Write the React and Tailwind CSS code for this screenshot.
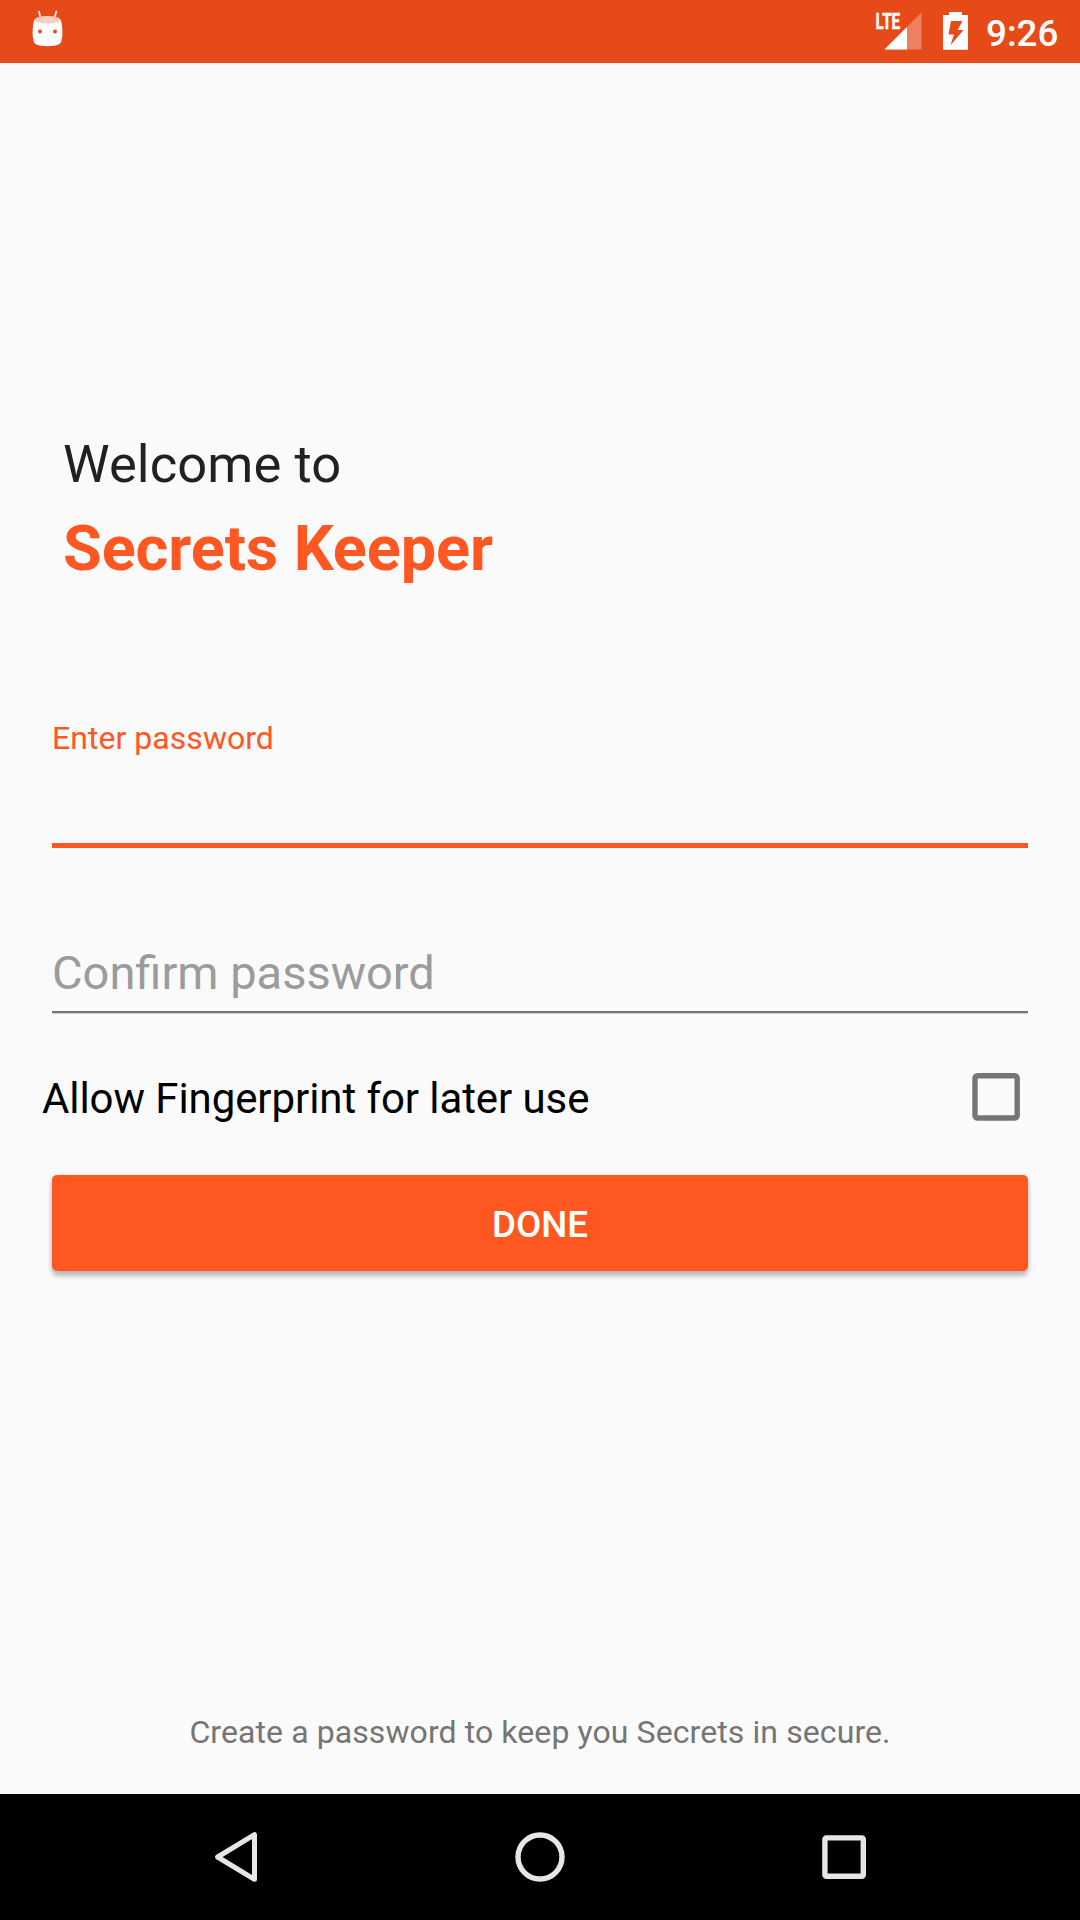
function AndroidHead() {
  return (
    <svg width="32" height="38" viewBox="32 10 32 38" fill="none">
      <path d="M39 11.5 L40.6 18.5 M56.3 11.5 L54.4 18.5" stroke="#fff" strokeWidth="1.7" strokeLinecap="round" />
      <path d="M34.2 20 H60.8 C62.8 27 63 37 60.9 42.5 C59 47.4 36 47.4 34.1 42.5 C32 37 32.2 27 34.2 20Z" fill="#fff" />
      <ellipse cx="47.5" cy="19.8" rx="13.1" ry="3.7" fill="#f9cdbf" />
      <circle cx="40" cy="31.5" r="2" fill="#e64a19" />
      <circle cx="55" cy="31.5" r="2" fill="#e64a19" />
    </svg>
  );
}

function Signal() {
  return (
    <svg width="58" height="50" viewBox="865 1 58 50" className="overflow-visible">
      <path d="M921.5 12.5 V49.5 H884.5Z" fill="#fff" fillOpacity="0.3" />
      <path d="M907 27 V49.5 H884.5Z" fill="#fff" />
      <text x="875.6" y="29.2" fontSize="22.5" fontWeight="700" fill="#fff" stroke="#fff" strokeWidth="0.5" textLength="24.5" lengthAdjust="spacingAndGlyphs">LTE</text>
    </svg>
  );
}

function Battery() {
  return (
    <svg width="26" height="40" viewBox="942 11 26 40">
      <path
        fill="#fff"
        fillRule="evenodd"
        d="M949 12 H962 V15 H968 V49.7 H943 V15 H949Z M951 21 L948.5 34.5 H954 L950.5 45.3 L963.5 30 H957.6 L962.5 21Z"
      />
    </svg>
  );
}

export default function App() {
  return (
    <div className="flex h-[1920px] w-[1080px] flex-col overflow-hidden bg-[#fafafa] font-['Roboto',sans-serif]">
      <header className="flex h-[63px] shrink-0 items-start bg-[#e64a19] pl-8 pr-[21px] text-white">
        <div className="pt-[10px]"><AndroidHead /></div>
        <div className="ml-auto flex items-start">
          <div className="pt-px"><Signal /></div>
          <div className="ml-[19px] pt-[11px]"><Battery /></div>
          <div className="ml-[18px] w-[73px] whitespace-nowrap pt-[12px] text-[36.75px] font-medium leading-[44px]">9:26</div>
        </div>
      </header>

      <main className="flex flex-1 flex-col">
        <h1 className="mt-[370px] pl-[63px]">
          <span className="block text-[52.5px] leading-[62px] tracking-[0.1px] text-[#212121]">Welcome to</span>
          <span className="mt-[17px] block text-[63px] font-bold leading-[74px] tracking-[-0.1px] text-[#ff5722]">Secrets Keeper</span>
        </h1>

        <div className="mx-[52px] mt-[133px] h-[129px] border-b-[5px] border-[#ff5722]">
          <label className="block text-[32px] leading-[38px] tracking-[0.04px] text-[#ff5722]">Enter password</label>
        </div>

        <div className="mx-[52px] mt-[97px] h-[68px] border-b-2 border-[#757575] shadow-[0_1px_0_#d0d0d0]">
          <label className="block text-[47px] leading-[56px] text-[#9b9b9b]">Confirm password</label>
        </div>

        <div className="mt-[60px] flex h-[50px] items-start justify-between pl-[42px] pr-[60px]">
          <span className="pt-px text-[42px] leading-[50px] tracking-[-0.08px] text-black">Allow Fingerprint for later use</span>
          <svg width="48" height="48" viewBox="0 0 48 48" fill="none">
            <rect x="3" y="2.8" width="42.2" height="42.2" rx="2.5" stroke="#757575" strokeWidth="5.4" />
          </svg>
        </div>

        <button className="mx-[52px] mt-[52px] flex h-24 items-center justify-center rounded-[5px] bg-[#ff5722] pt-[3px] text-[36.75px] font-medium leading-[44px] text-white shadow-[0_5px_5px_rgba(0,0,0,0.24),0_0_5px_rgba(0,0,0,0.1)]">
          DONE
        </button>

        <p className="mt-auto pb-[43px] text-center text-[32px] leading-[38px] tracking-[0.09px] text-[#757575]">
          Create a password to keep you Secrets in secure.
        </p>
      </main>

      <nav className="flex h-[126px] shrink-0 items-center justify-center gap-[254px] bg-black">
        <svg width="50" height="52" viewBox="211 1831 50 52" fill="none">
          <path d="M254.5 1834.7 V1879.3 L217.6 1857Z" stroke="#e6e6e6" strokeWidth="5" strokeLinejoin="round" />
        </svg>
        <svg width="50" height="52" viewBox="515 1831 50 52" fill="none">
          <circle cx="540" cy="1857" r="22" stroke="#e6e6e6" strokeWidth="5.4" />
        </svg>
        <svg width="50" height="52" viewBox="819 1831 50 52" fill="none">
          <rect x="824.9" y="1837.9" width="38.4" height="38.4" rx="1.5" stroke="#e6e6e6" strokeWidth="5.4" />
        </svg>
      </nav>
    </div>
  );
}
